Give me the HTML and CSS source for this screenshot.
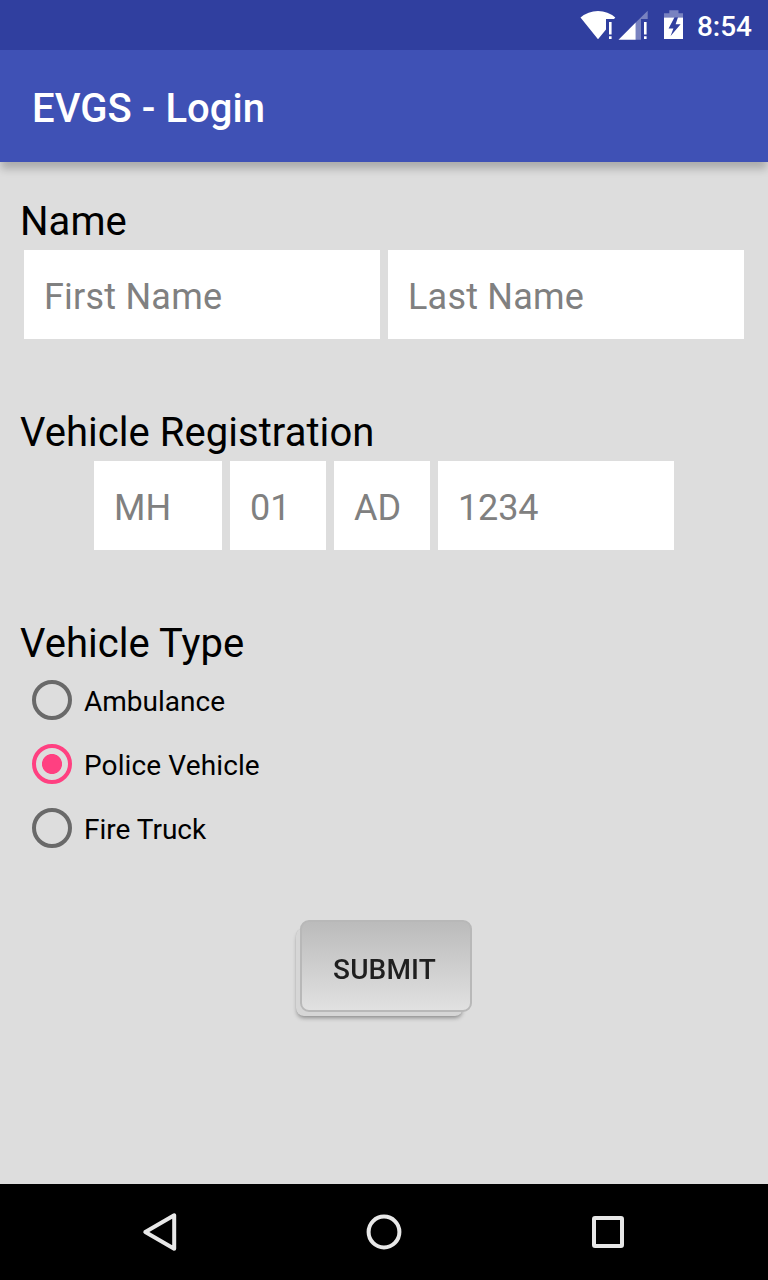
FILE: index.html
```html
<!DOCTYPE html>
<html lang="en">
<head>
<meta charset="utf-8">
<title>EVGS - Login</title>
<link rel="stylesheet" href="styles.css">
</head>
<body>
<div class="screen">
  <div class="status-bar">
    <svg class="status-icons" width="108" height="50" viewBox="580 0 108 50">
      <path class="solid" d="M580.5 17.6Q588 11 598 11T615.3 17.6L614 19H606V29.4L598 39.2Z"/>
      <path class="solid" d="M609 22h2.6v12.6H609zM609 36.2h2.6v2.8H609z"/>
      <path class="solid" d="M618.5 39.7L635.7 22.5V39.7Z"/>
      <path class="faded" d="M635.7 22.5L647.7 10.7V19H641V39.7H635.7Z"/>
      <path class="solid" d="M644 22h2.6v12.6H644zM644 36.2h2.6v2.8H644z"/>
      <path class="faded" d="M669.3 10.3h9.2v3h4.5v4.2h-19v-4.2h5.3z"/>
      <path class="solid" d="M664 17.5h19V39H664z"/>
      <path class="bolt" d="M674.5 17.2L668.6 28.6H673.4L670.6 36L680.6 24.2H675.6L678 17.2Z"/>
    </svg>
    <span class="clock">8:54</span>
  </div>
  <header class="app-bar"><h1 class="title">EVGS - Login</h1></header>
  <main class="form">
    <h2 class="label">Name</h2>
    <div class="fields">
      <input class="field name" placeholder="First Name">
      <input class="field name" placeholder="Last Name">
    </div>
    <h2 class="label">Vehicle Registration</h2>
    <div class="fields">
      <input class="field state" placeholder="MH">
      <input class="field code" placeholder="01">
      <input class="field code" placeholder="AD">
      <input class="field number" placeholder="1234">
    </div>
    <h2 class="label">Vehicle Type</h2>
    <div class="radios">
      <label class="option"><input class="radio" type="radio" name="type"><span class="option-text">Ambulance</span></label>
      <label class="option"><input class="radio" type="radio" name="type" checked><span class="option-text spaced">Police Vehicle</span></label>
      <label class="option"><input class="radio" type="radio" name="type"><span class="option-text">Fire Truck</span></label>
    </div>
    <button class="submit" type="button">SUBMIT</button>
  </main>
  <nav class="nav-bar">
    <svg width="48" height="48" viewBox="136 1208 48 48"><path d="M174.2 1215.3V1248.7L145.3 1232Z"/></svg>
    <svg width="48" height="48" viewBox="360 1208 48 48"><circle cx="384" cy="1232" r="15.4"/></svg>
    <svg width="48" height="48" viewBox="584 1208 48 48"><rect x="594" y="1218" width="28" height="28" rx="1"/></svg>
  </nav>
</div>
</body>
</html>
```

FILE: styles.css
```css
* { box-sizing: border-box; }
body { margin: 0; font-family: Roboto, sans-serif; }
.screen {
  display: flex;
  flex-direction: column;
  width: 768px;
  height: 1280px;
  background: #ddd;
  overflow: hidden;
}
.status-bar {
  display: flex;
  align-items: center;
  justify-content: flex-end;
  height: 50px;
  padding-right: 16px;
  background: #303f9f;
}
.status-icons { margin-right: 9px; }
.solid { fill: #fff; }
.faded { fill: #fff; fill-opacity: .35; }
.bolt { fill: #303f9f; }
.clock {
  padding-top: 3px;
  color: #fff;
  font-size: 28px;
  font-weight: 500;
  line-height: 34px;
}
.app-bar {
  display: flex;
  align-items: center;
  height: 112px;
  padding: 6px 32px 0;
  background: #3f51b5;
  box-shadow: 0 8px 8px -1px rgba(0, 0, 0, .22);
}
.title {
  margin: 0;
  color: #fff;
  font-size: 40px;
  font-weight: 500;
  letter-spacing: .05px;
  line-height: 48px;
}
.form {
  flex: 1;
  display: flex;
  flex-direction: column;
  padding: 36px 20px 0;
}
.label {
  margin: 0;
  color: #000;
  font-size: 40px;
  font-weight: 400;
  letter-spacing: .05px;
  line-height: 48px;
}
.fields {
  display: flex;
  justify-content: center;
  gap: 8px;
  margin: 4px 4px 70px;
}
.field {
  height: 89px;
  padding: 5px 0 0 20px;
  border: 0;
  border-radius: 0;
  outline: 0;
  background: #fff;
  font-family: inherit;
  font-size: 36px;
}
.field::placeholder { color: #808080; opacity: 1; }
.name { width: 356px; letter-spacing: .22px; }
.state { width: 128px; }
.code { width: 96px; }
.number { width: 236px; letter-spacing: -.15px; }
.option {
  display: flex;
  align-items: center;
  gap: 12px;
  height: 64px;
  padding-left: 12px;
  color: #000;
  font-size: 28px;
  line-height: 36px;
}
.option-text { padding-top: 4px; }
.spaced { letter-spacing: .12px; }
.radio {
  appearance: none;
  flex: none;
  width: 40px;
  height: 40px;
  margin: 0;
  border: 4px solid #696969;
  border-radius: 50%;
}
.radio:checked {
  border-color: #ff4081;
  background: radial-gradient(circle, #ff4081 9.6px, transparent 10.4px);
}
.submit {
  position: relative;
  align-self: center;
  width: 172px;
  height: 92px;
  margin: 60px 0 0 4px;
  padding: 6px 3px 0 0;
  border: 2px solid #b8b8b8;
  border-radius: 9px;
  background: linear-gradient(#bbb, #e1e1e1);
  color: #1f1f1f;
  font-family: inherit;
  font-size: 28px;
  font-weight: 500;
  letter-spacing: .15px;
  transform-style: preserve-3d;
}
.submit::before {
  content: "";
  position: absolute;
  left: -6px;
  top: 6px;
  width: 167px;
  height: 88px;
  border-radius: 8px;
  background: #d6d6d6;
  box-shadow: 0 3px 4px -1px rgba(0, 0, 0, .36), 0 0 1px rgba(0, 0, 0, .16);
  transform: translateZ(-1px);
}
.nav-bar {
  display: flex;
  align-items: center;
  justify-content: space-between;
  height: 96px;
  padding: 0 136px;
  background: #000;
}
.nav-bar svg {
  fill: none;
  stroke: #e8e8e8;
  stroke-width: 4;
  stroke-linejoin: round;
}
```
